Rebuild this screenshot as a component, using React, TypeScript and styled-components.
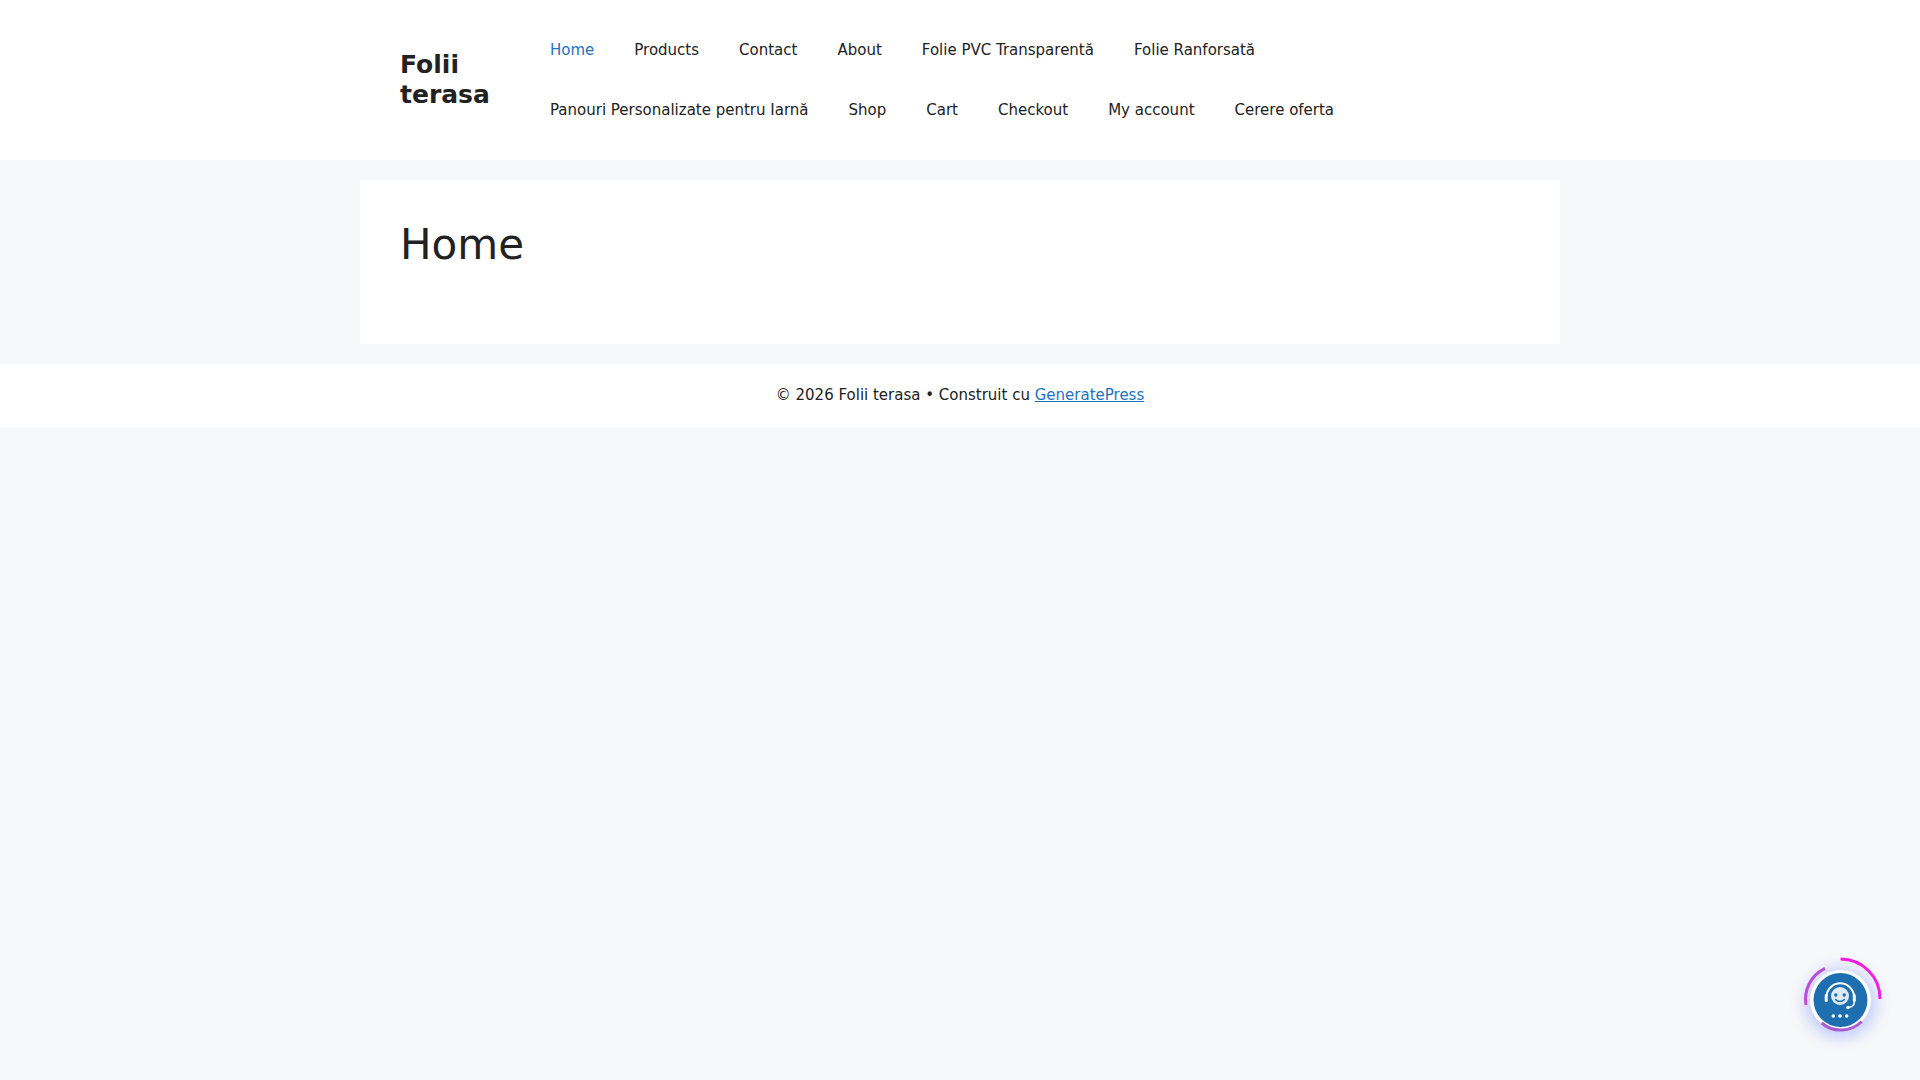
import React from 'react';
import styled, {createGlobalStyle} from 'styled-components';

const GlobalStyle = createGlobalStyle`
  html, body {
    margin: 0;
    padding: 0;
  }
  body {
    min-height: 100vh;
    background: #f7f8f9;
    color: #222222;
    font-family: "DejaVu Sans", sans-serif;
    font-size: 17px;
    line-height: 1.5;
  }
`;

const Header = styled.header`
  background: #ffffff;
`;

const InsideHeader = styled.div`
  display: flex;
  align-items: center;
  box-sizing: border-box;
  width: 1200px;
  margin: 0 auto;
  padding: 20px 40px;
`;

const SiteTitle = styled.a`
  flex: 0 0 130px;
  font-size: 25px;
  font-weight: 700;
  line-height: 30px;
  color: #222222;
  text-decoration: none;
`;

const Nav = styled.nav`
  display: flex;
  flex-wrap: wrap;
  width: 900px;
`;

const NavLink = styled.a<{ $active?: boolean }>`
  padding: 0 20px;
  font-size: 15px;
  line-height: 60px;
  color: ${props => props.$active ? '#1e73be' : '#222222'};
  text-decoration: none;
`;

const Content = styled.main`
  box-sizing: border-box;
  width: 1200px;
  height: 164px;
  margin: 20px auto;
  padding: 40px;
  background: #ffffff;
`;

const PageTitle = styled.h1`
  margin: 0;
  font-size: 42px;
  font-weight: 400;
  line-height: 1.2;
`;

const Footer = styled.footer`
  padding: 20px 40px;
  background: #ffffff;
  font-size: 15px;
  text-align: center;
`;

const FooterLink = styled.a`
  color: #1e73be;
`;

const ChatWidget = styled.button`
  position: fixed;
  right: 30px;
  bottom: 30px;
  width: 100px;
  height: 100px;
  padding: 0;
  border: 0;
  background: transparent;
`;

const ChatBubble = styled.span`
  position: absolute;
  left: 20px;
  top: 20px;
  width: 61px;
  height: 60px;
  border-radius: 50%;
  background: #ffffff;
  box-shadow: 0 3px 14px 6px rgba(90, 115, 255, 0.3);
`;

const ChatArt = styled.svg`
  position: absolute;
  left: 0;
  top: 0;
`;

const links = [
    'Home', 'Products', 'Contact', 'About', 'Folie PVC Transparentă', 'Folie Ranforsată',
    'Panouri Personalizate pentru Iarnă', 'Shop', 'Cart', 'Checkout', 'My account', 'Cerere oferta',
];

const App = () => {
    return (
        <>
            <GlobalStyle/>
            <Header>
                <InsideHeader>
                    <SiteTitle href="#">Folii terasa</SiteTitle>
                    <Nav>
                        {links.map((link, i) => <NavLink key={link} href="#" $active={i === 0}>{link}</NavLink>)}
                    </Nav>
                </InsideHeader>
            </Header>
            <Content>
                <PageTitle>Home</PageTitle>
            </Content>
            <Footer>
                © 2026 Folii terasa • Construit cu <FooterLink href="#">GeneratePress</FooterLink>
            </Footer>
            <ChatWidget aria-label="Chat">
                <ChatBubble/>
                <ChatArt width="100" height="100" viewBox="0 0 100 100" fill="none">
                    <circle cx="50.5" cy="50" r="27" fill="#1e6fb0"/>
                    {/* rotating rings */}
                    <path d="M50.5 9 A39.5 39.5 0 0 1 90 49" stroke="#f01ee0" strokeWidth="3"/>
                    <path d="M35 18.3 A34.5 34.5 0 0 0 16 55" stroke="#bb4cd8" strokeWidth="3"/>
                    <path d="M31.7 73 A29.5 29.5 0 0 0 71.7 71.5" stroke="#a85ccf" strokeWidth="3"/>
                    {/* agent */}
                    <circle cx="50" cy="46" r="9" fill="#dfeaf5"/>
                    <path d="M36.5 46 A13.8 13.8 0 0 1 64 46" stroke="#ffffff" strokeWidth="2"/>
                    <rect x="34.7" y="44" width="3" height="8" rx="1.5" fill="#ffffff"/>
                    <rect x="62.8" y="44" width="3" height="8" rx="1.5" fill="#ffffff"/>
                    <path d="M64.3 52 Q64 57 58.5 57.5" stroke="#ffffff" strokeWidth="1.5" strokeLinecap="round"/>
                    <circle cx="58" cy="57.5" r="1.8" fill="#ffffff"/>
                    <circle cx="45.8" cy="45" r="1.7" fill="#1e6fb0"/>
                    <circle cx="54.2" cy="45" r="1.7" fill="#1e6fb0"/>
                    <path d="M45.5 49.5 Q50 53.5 54.5 49.5" stroke="#1e6fb0" strokeWidth="1.5" strokeLinecap="round"/>
                    <circle cx="43.3" cy="66" r="1.8" fill="#ffffff"/>
                    <circle cx="50" cy="66" r="1.8" fill="#ffffff"/>
                    <circle cx="56.7" cy="66" r="1.8" fill="#ffffff"/>
                </ChatArt>
            </ChatWidget>
        </>
    );
};

export default App;
